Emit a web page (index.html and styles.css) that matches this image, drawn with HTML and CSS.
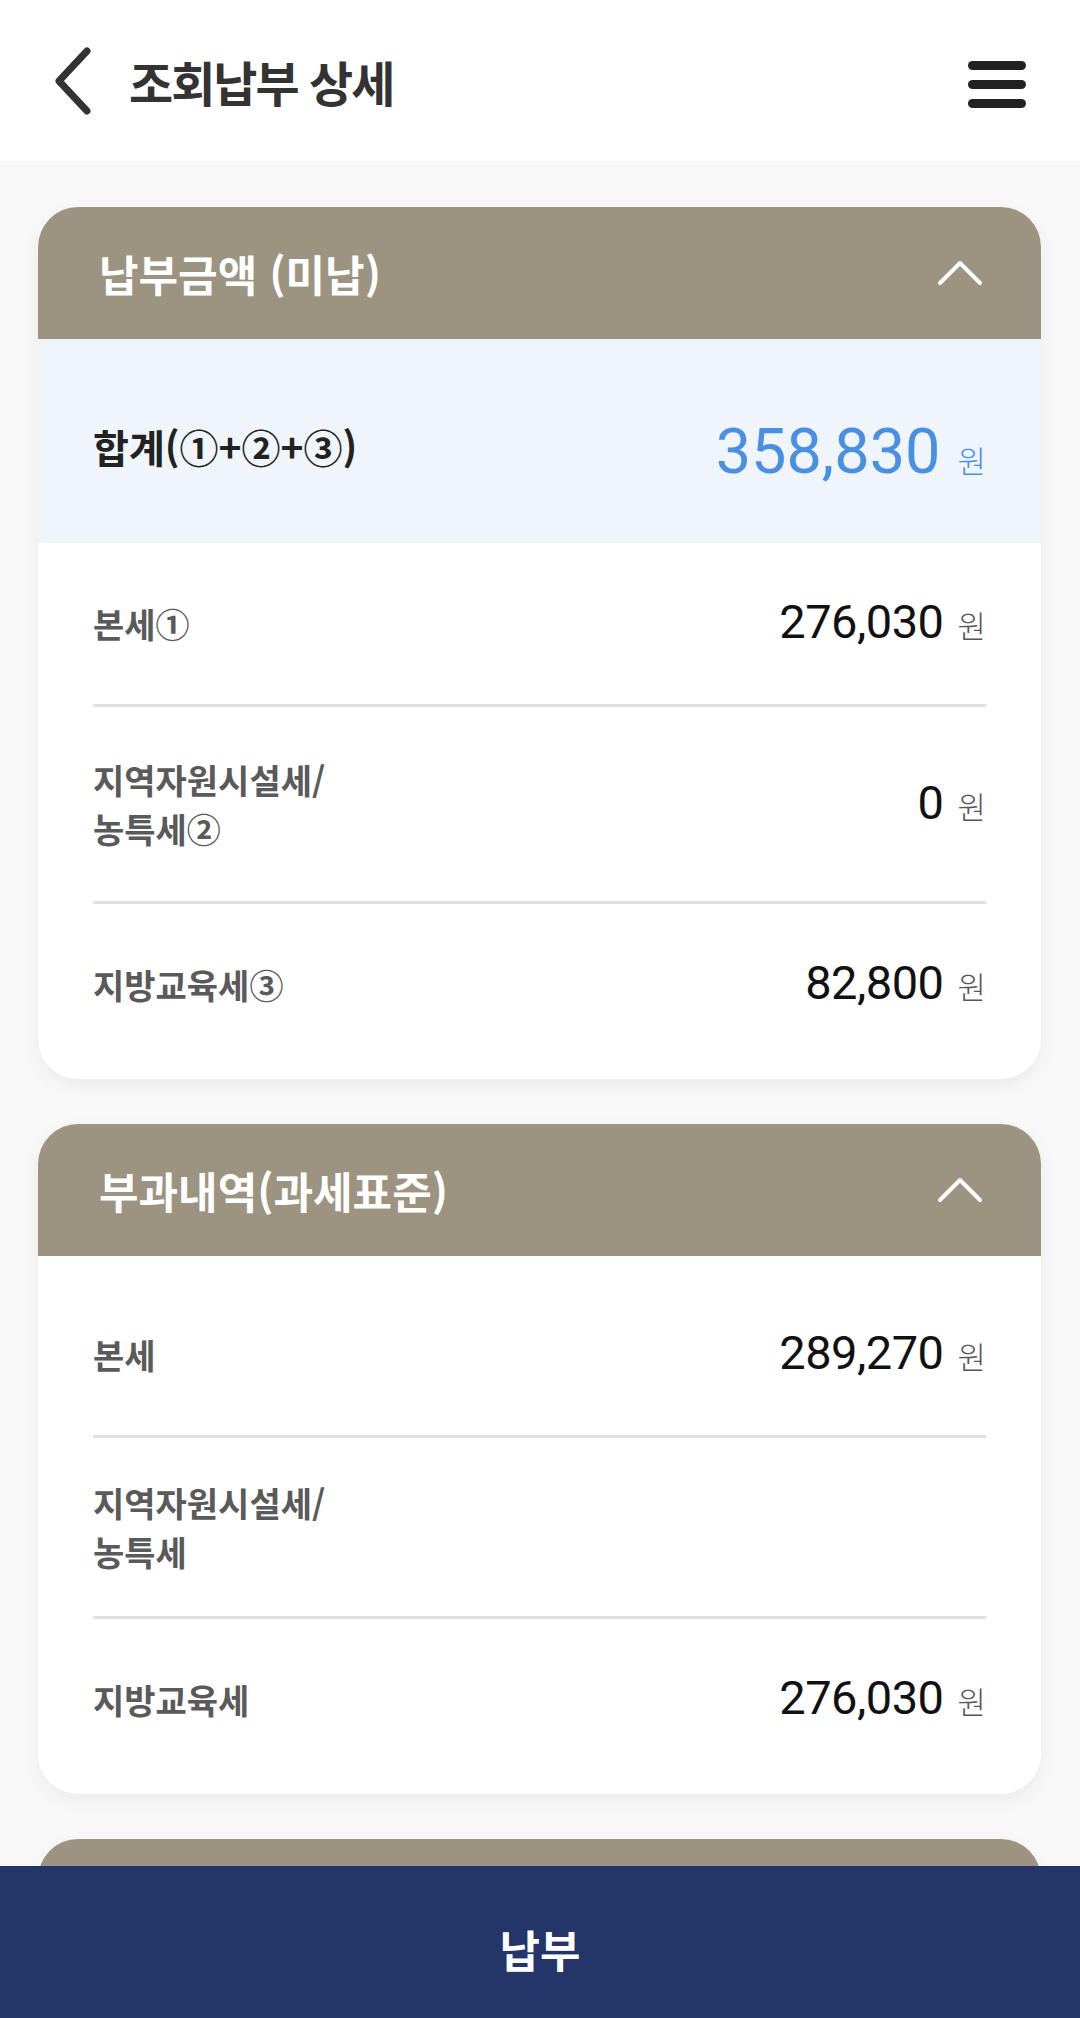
FILE: index.html
```html
<!DOCTYPE html>
<html lang="ko">
<head>
    <meta charset="utf-8">
    <title>조회납부 상세</title>
    <link rel="stylesheet" href="styles.css">
</head>
<body>
    <div class="top-bar">
        <svg class="back-icon" width="36" height="68" viewBox="0 0 36 68">
            <path d="M32 4 L4 34 L32 64" fill="none" stroke="#333" stroke-width="7" stroke-linecap="round" stroke-linejoin="round"/>
        </svg>
        <h1 class="page-title">조회납부 상세</h1>
        <svg class="menu-icon" width="58" height="48" viewBox="0 0 58 48">
            <rect x="0" y="0" width="58" height="9" rx="4.5" fill="#222"/>
            <rect x="0" y="19" width="58" height="9" rx="4.5" fill="#222"/>
            <rect x="0" y="38" width="58" height="9" rx="4.5" fill="#222"/>
        </svg>
    </div>

    <div class="content">
        <div class="card">
            <div class="card-head">
                <span class="card-title">납부금액 (미납)</span>
                <svg class="fold-icon" width="46" height="26" viewBox="0 0 46 26">
                    <path d="M3 23 L23 3 L43 23" fill="none" stroke="#fff" stroke-width="4" stroke-linecap="round" stroke-linejoin="round"/>
                </svg>
            </div>
            <div class="sum-row">
                <span class="sum-label">합계(①+②+③)</span>
                <span class="amount sum-amount">
                    <span class="sum-num">358,830</span>
                    <span class="won won-blue">원</span>
                </span>
            </div>
            <div class="card-body">
                <div class="row">
                    <span class="label">본세①</span>
                    <span class="amount"><span class="num">276,030</span><span class="won">원</span></span>
                </div>
                <div class="row">
                    <span class="label label-tall">지역자원시설세/<br>농특세②</span>
                    <span class="amount"><span class="num">0</span><span class="won">원</span></span>
                </div>
                <div class="row">
                    <span class="label">지방교육세③</span>
                    <span class="amount"><span class="num">82,800</span><span class="won">원</span></span>
                </div>
            </div>
        </div>

        <div class="card">
            <div class="card-head">
                <span class="card-title">부과내역(과세표준)</span>
                <svg class="fold-icon" width="46" height="26" viewBox="0 0 46 26">
                    <path d="M3 23 L23 3 L43 23" fill="none" stroke="#fff" stroke-width="4" stroke-linecap="round" stroke-linejoin="round"/>
                </svg>
            </div>
            <div class="card-body body-top">
                <div class="row">
                    <span class="label">본세</span>
                    <span class="amount"><span class="num">289,270</span><span class="won">원</span></span>
                </div>
                <div class="row row-two">
                    <span class="label label-tall">지역자원시설세/<br>농특세</span>
                    <span class="amount"></span>
                </div>
                <div class="row">
                    <span class="label">지방교육세</span>
                    <span class="amount"><span class="num">276,030</span><span class="won">원</span></span>
                </div>
            </div>
        </div>

        <div class="card">
            <div class="card-head">
                <span class="card-title"></span>
                <svg class="fold-icon" width="46" height="26" viewBox="0 0 46 26">
                    <path d="M3 23 L23 3 L43 23" fill="none" stroke="#fff" stroke-width="4" stroke-linecap="round" stroke-linejoin="round"/>
                </svg>
            </div>
            <div class="card-body body-top"></div>
        </div>
    </div>

    <button class="pay-button">납부</button>
</body>
</html>
```

FILE: styles.css
```css
body {
    margin: 0;
    background-color: #f8f8f8;
    font-family: "Noto Sans CJK KR", "Noto Sans", sans-serif;
}
.top-bar {
    height: 161px;
    background-color: #fff;
    display: flex;
    align-items: center;
    padding: 0 54px 0 55px;
    box-sizing: border-box;
}
.back-icon {
    display: block;
}
.page-title {
    margin: 0 0 0 38px;
    flex: 1;
    font-size: 48px;
    font-weight: 700;
    color: #333;
    letter-spacing: -2px;
}
.menu-icon {
    display: block;
    margin-top: 8px;
}
.content {
    padding: 46px 39px 200px 38px;
}
.card {
    background-color: #fff;
    border-radius: 40px;
    overflow: hidden;
    margin-bottom: 45px;
    box-shadow: 0 6px 18px rgba(0, 0, 0, 0.06);
}
.card-head {
    height: 132px;
    background-color: #9c9381;
    display: flex;
    align-items: center;
    justify-content: space-between;
    padding: 0 58px 0 61px;
}
.card-title {
    color: #fff;
    font-size: 43px;
    font-weight: 700;
}
.fold-icon {
    display: block;
}
.sum-row {
    height: 204px;
    box-sizing: border-box;
    padding: 10px 55px 0 55px;
    background-color: #eff5fa;
    display: flex;
    align-items: center;
    justify-content: space-between;
}
.sum-label {
    font-size: 39px;
    font-weight: 700;
    color: #222;
}
.sum-amount {
    margin-top: 20px;
}
.sum-num {
    font-family: Roboto, sans-serif;
    font-size: 63px;
    color: #4a90e2;
}
.card-body {
    padding: 0 55px 14px 55px;
}
.body-top {
    padding-top: 18px;
}
.row {
    display: flex;
    align-items: center;
    justify-content: space-between;
    padding: 48px 0;
    border-bottom: 3px solid #e0e0e0;
}
.row:last-child {
    border-bottom: none;
}
.row-two {
    padding: 40px 0;
}
.label {
    font-size: 34px;
    font-weight: 700;
    color: #5a5a5a;
    line-height: 44px;
}
.label-tall {
    line-height: 49px;
}
.amount {
    display: flex;
    align-items: baseline;
    line-height: 62px;
}
.num {
    font-family: Roboto, sans-serif;
    font-size: 47px;
    letter-spacing: -0.5px;
    color: #111;
}
.won {
    margin-left: 14px;
    font-size: 31px;
    font-weight: 300;
    color: #555;
}
.won-blue {
    margin-left: 17px;
    color: #4a90e2;
}
.pay-button {
    position: fixed;
    left: 0;
    bottom: 0;
    width: 100%;
    height: 152px;
    padding-top: 14px;
    border: none;
    background-color: #233569;
    color: #fff;
    font-family: "Noto Sans CJK KR", sans-serif;
    font-size: 44px;
    font-weight: 700;
}
```
